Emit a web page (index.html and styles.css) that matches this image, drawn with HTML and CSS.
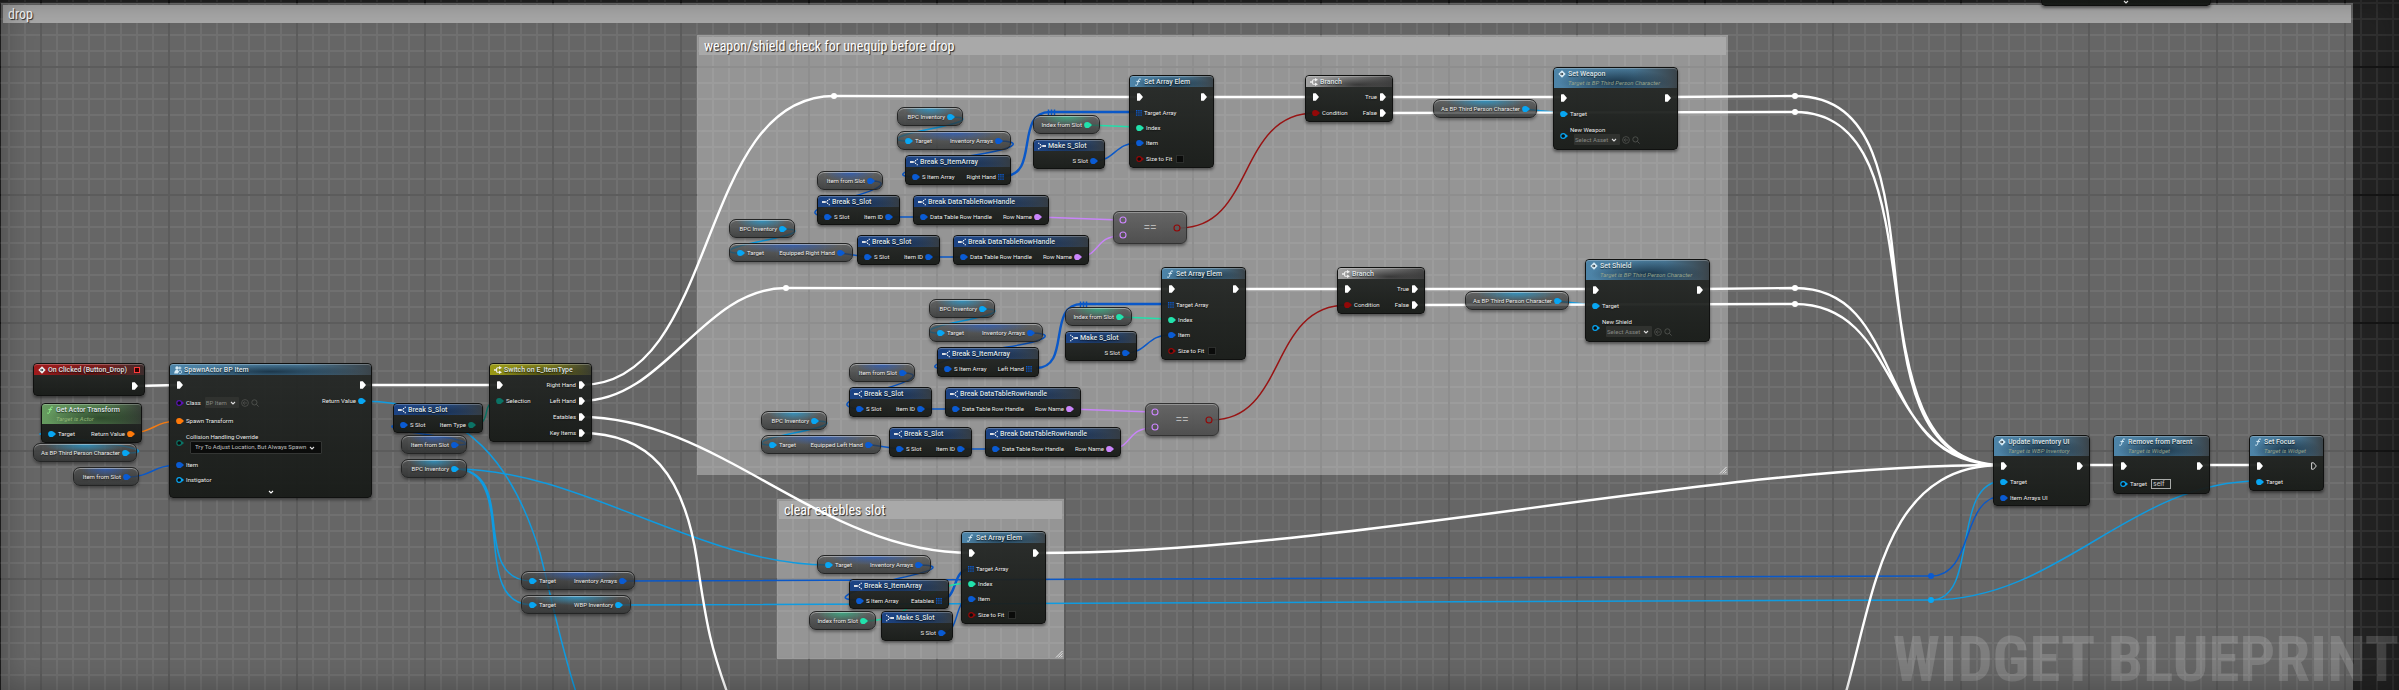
FILE: index.html
```html
<!DOCTYPE html>
<html lang="en">
<head>
<meta charset="utf-8">
<title>Widget Blueprint</title>
<link rel="stylesheet" href="styles.css">
</head>
<body>
<svg class="defs" aria-hidden="true">
  <symbol id="pin" viewBox="0 0 8 8"><circle cx="3.2" cy="4" r="3.1"/><path d="M5.6 1.8L8 4L5.6 6.2z"/></symbol>
  <symbol id="pin-open" viewBox="0 0 8 8"><circle cx="3.2" cy="4" r="2.4" fill="#0b0d0d" stroke="currentColor" stroke-width="1.2"/><path d="M6 2.2L8 4L6 5.8z"/></symbol>
  <symbol id="ring" viewBox="0 0 8 8"><circle cx="4" cy="4" r="3" fill="none" stroke="currentColor" stroke-width="1.1"/></symbol>
  <symbol id="exec" viewBox="0 0 6 8"><path d="M0 .8Q0 .2 .6 .2H2.8L6 4L2.8 7.8H.6Q0 7.8 0 7.2z"/></symbol>
  <symbol id="exec-open" viewBox="0 0 6 8"><path d="M.6 .8H2.6L5.3 4L2.6 7.2H.6z" fill="none" stroke="currentColor" stroke-width=".8"/></symbol>
  <symbol id="array" viewBox="0 0 6 6"><path d="M0 0h1.4v1.4H0zM2.2 0h1.4v1.4H2.2zM4.4 0h1.4v1.4H4.4zM0 2.2h1.4v1.4H0zM2.2 2.2h1.4v1.4H2.2zM4.4 2.2h1.4v1.4H4.4zM0 4.4h1.4v1.4H0zM2.2 4.4h1.4v1.4H2.2zM4.4 4.4h1.4v1.4H4.4z"/></symbol>
  <symbol id="i-fn" viewBox="0 0 8 8"><path d="M6.8 1.2C5.2 .4 4.6 1.6 4.3 3.2L3.6 5.8C3.3 7.2 2.3 7.7 1.2 7M2.4 3.4H6" fill="none" stroke="currentColor" stroke-width="1"/></symbol>
  <symbol id="i-event" viewBox="0 0 8 8"><path d="M4 .3L7.7 4L4 7.7L.3 4z"/><path d="M3.8 2.4L5.4 4L3.8 5.6V4.6H2.2V3.4H3.8z" fill="#1c2830"/></symbol>
  <symbol id="i-break" viewBox="0 0 8 8"><path d="M0 3.1H3.8V4.9H0z"/><path d="M5 2h1.2v1H5zM6.6 .8H8v1H6.600zM5 5h1.200v1H5zM6.600 6.200H8v1H6.600zM4.400 3.200h1v1.600h-1z"/></symbol>
  <symbol id="i-make" viewBox="0 0 8 8"><path d="M4.2 3.1H8V4.9H4.2z"/><path d="M1.800 2h1.200v1H1.800zM0 .8h1.400v1H0zM1.800 5h1.200v1H1.800zM0 6.200h1.400v1H0zM2.600 3.200h1v1.600h-1z"/></symbol>
  <symbol id="i-branch" viewBox="0 0 8 8"><path d="M0 3.3H2.4V4.7H0zM5 0L8 1.8L5 3.4zM5 4.6L8 6.2L5 8z"/><path d="M5.4 1.7H3.6Q2.6 1.7 2.6 2.8V5.2Q2.6 6.3 3.6 6.3H5.4" fill="none" stroke="currentColor" stroke-width="1.1"/></symbol>
  <symbol id="i-spawn" viewBox="0 0 8 8"><circle cx="3" cy="2" r="1.7"/><path d="M.2 7.6Q.4 3.6 3.4 3.8L5 5.2L4 7.6zM5.4 .4h1v1h1v1h-1v1h-1v-1h-1v-1h1z"/><path d="M4.6 5.6a1.6 1.6 0 1 1 .6 1.6" fill="none" stroke="currentColor" stroke-width=".8"/></symbol>
  <symbol id="i-back" viewBox="0 0 8 8"><g fill="none" stroke="currentColor" stroke-width=".8"><circle cx="4" cy="4" r="3.4"/><path d="M6 4H2.2M3.8 2.3L2.1 4L3.8 5.7"/></g></symbol>
  <symbol id="i-find" viewBox="0 0 8 8"><g fill="none" stroke="currentColor" stroke-width=".9"><circle cx="3.4" cy="3.4" r="2.6"/><path d="M5.4 5.4L7.6 7.6"/></g></symbol>
  <symbol id="i-down" viewBox="0 0 6 6"><path d="M1 2L3 4L5 2" fill="none" stroke="currentColor" stroke-width="1.1"/></symbol>
  <symbol id="grip" viewBox="0 0 8 8"><path d="M1 7.5L7.5 1M3.4 7.5L7.5 3.4M5.8 7.5L7.5 5.8" fill="none" stroke="#e4e4e4" stroke-width="1"/></symbol>
</svg>

<main class="graph">
  <section class="comment comment-drop"><h1 class="comment-title">drop</h1></section>
  <section class="comment comment-equip"><h2 class="comment-title">weapon/shield check for unequip before drop</h2><svg class="grip"><use href="#grip"/></svg></section>
  <section class="comment comment-eat"><h2 class="comment-title">clear eatebles slot</h2><svg class="grip"><use href="#grip"/></svg></section>

  <svg class="wires" aria-hidden="true">
    <g id="lane-wires">
      <path class="w-exec" d="M1204 97H1315M1383 97H1562"/>
      <path class="w-struct thick" d="M1004 176C1040 176 1014 112 1050 112H1136"/>
      <path class="w-struct" d="M1048.500 109.500v6M1051.500 109.500v6M1054.500 109.500v6"/>
      <path class="w-int" d="M1088 125L1137 127"/>
      <path class="w-struct" d="M1094 161C1115 161 1115 143 1137 143M998 141C1022 141 1020 148 975 155S880 176 914 177M871 181C887 181 886 187 855 196S800 213 826 217M889 217H923M929 257H963M840 253L867 257"/>
      <path class="w-obj" d="M950 117C972 117 966 122 930 129C894 136 890 141 908 141M782 229C804 229 798 234 762 241C726 248 722 253 740 253M1524 109L1562 113"/>
      <path class="w-name" d="M1038 217L1120 220M1078 257C1100 257 1095 236 1120 236"/>
      <path class="w-bool" d="M1180 228C1255 228 1237 113 1315 113"/>
    </g>
    <use href="#lane-wires" transform="translate(32 192)"/>
    <path class="w-obj" d="M361 401C470 401 515 470 540 553C552 600 562 650 576 692M125 453C150 453 140 448 100 442S20 434 51 433M455 469C520 469 468 581 532 581M455 469C520 469 468 605 532 605M455 469C580 469 700 565 828 565M618 605L1931 600M1931 600C1980 600 1950 481 2003 481M1931 600C2060 600 2130 481 2259 481"/>
    <path class="w-struct" d="M127 477C152 477 153 465 178 465M455 445C477 445 466 440 430 435S380 425 403 425M622 581L1931 576C1975 576 1960 496 2003 496M918 565C942 565 938 570 900 578C860 588 825 600 859 600M941 633C962 633 952 599 971 599"/>
    <path class="w-struct thick" d="M939 600C960 600 950 569 971 569"/>
    <path class="w-int" d="M864 621C915 621 920 583 971 583"/>
    <path class="w-transform" d="M130 433C153 433 155 421 178 421"/>
    <path class="w-enum" d="M472 425C495 425 478 401 499 401"/>
    <path class="w-exec" d="M135 386L178 385M362 385H498M581 385C720 385 695 96 834 96L1138 97M581 401C665 401 702 288 786 288L1170 289M581 417C720 417 820 553 971 553M581 433C650 433 684 475 697 560C707 630 712 650 727 692M1036 553C1350 553 1700 465 2002 465"/>
    <path class="w-exec" d="M1668 97L1795 96M1383 113L1795 112M1700 289L1795 288M1415 305L1795 304M1795 96C1960 96 1830 465 2002 465M1795 112C1950 112 1840 465 2002 465M1795 288C1910 288 1870 465 2002 465M1795 304C1905 304 1880 465 2002 465M1846 692C1875 590 1885 465 2002 465M2080 465H2123M2200 465H2259"/>
    <g fill="#fff"><circle cx="834" cy="96" r="3"/><circle cx="786" cy="288" r="3"/><circle cx="1795" cy="96" r="3"/><circle cx="1795" cy="112" r="3"/><circle cx="1795" cy="288" r="3"/><circle cx="1795" cy="304" r="3"/></g>
    <circle cx="1931" cy="576" r="3" fill="#0a5bd3"/><circle cx="1931" cy="600" r="3" fill="#08a6f3"/>
  </svg>

  <article class="node stub at-stub"><svg class="more"><use href="#i-down"/></svg></article>

  <article class="node at-clicked">
    <header class="head red"><svg class="icon"><use href="#i-event"/></svg><h3>On Clicked (Button_Drop)</h3><i class="delegate"></i></header>
    <div class="pins"><div class="col out"><div class="pin tall"><svg class="exec"><use href="#exec"/></svg></div></div></div>
  </article>
  <article class="node at-transform">
    <header class="head green two"><svg class="icon"><use href="#i-fn"/></svg><h3>Get Actor Transform</h3><p>Target is Actor</p></header>
    <div class="pins"><div class="col"><div class="pin"><svg class="dot obj"><use href="#pin"/></svg>Target</div></div><div class="col out"><div class="pin">Return Value<svg class="dot transform"><use href="#pin"/></svg></div></div></div>
  </article>
  <article class="pill p-obj at-char0"><span class="pin">As BP Third Person Character<svg class="dot obj"><use href="#pin"/></svg></span></article>
  <article class="pill p-struct at-item0"><span class="pin">Item from Slot<svg class="dot struct"><use href="#pin"/></svg></span></article>

  <article class="node at-spawn">
    <header class="head blue"><svg class="icon"><use href="#i-spawn"/></svg><h3>SpawnActor BP Item</h3></header>
    <div class="pins">
      <div class="col">
        <div class="pin"><svg class="exec"><use href="#exec"/></svg></div>
        <div class="pin class-row"><svg class="dot class"><use href="#pin-open"/></svg><label for="cls">Class</label><span class="pick soft"><select id="cls"><option>BP Item</option></select><svg><use href="#i-down"/></svg></span><button class="tool" aria-label="Use selected"><svg><use href="#i-back"/></svg></button><button class="tool" aria-label="Browse"><svg><use href="#i-find"/></svg></button></div>
        <div class="pin mid"><svg class="dot transform"><use href="#pin"/></svg>Spawn Transform</div>
        <div class="pin field"><svg class="dot enum"><use href="#pin-open"/></svg><div class="stack"><label for="col">Collision Handling Override</label><span class="pick dark"><select id="col"><option>Try To Adjust Location, But Always Spawn</option></select><svg><use href="#i-down"/></svg></span></div></div>
        <div class="pin short"><svg class="dot struct"><use href="#pin"/></svg>Item</div>
        <div class="pin short"><svg class="dot obj"><use href="#pin-open"/></svg>Instigator</div>
      </div>
      <div class="col out"><div class="pin"><svg class="exec"><use href="#exec"/></svg></div><div class="pin">Return Value<svg class="dot obj"><use href="#pin"/></svg></div></div>
    </div>
    <button class="expand" aria-label="Show more"><svg class="more"><use href="#i-down"/></svg></button>
  </article>

  <article class="node at-type">
    <header class="head struct-h"><svg class="icon"><use href="#i-break"/></svg><h3>Break S_Slot</h3></header>
    <div class="pins"><div class="col"><div class="pin short"><svg class="dot struct"><use href="#pin"/></svg>S Slot</div></div><div class="col out"><div class="pin short">Item Type<svg class="dot enum"><use href="#pin"/></svg></div></div></div>
  </article>
  <article class="pill p-struct at-item1"><span class="pin">Item from Slot<svg class="dot struct"><use href="#pin"/></svg></span></article>
  <article class="pill p-obj at-bpc1"><span class="pin">BPC Inventory<svg class="dot obj"><use href="#pin"/></svg></span></article>

  <article class="node at-switch">
    <header class="head olive"><svg class="icon"><use href="#i-branch"/></svg><h3>Switch on E_ItemType</h3></header>
    <div class="pins">
      <div class="col"><div class="pin"><svg class="exec"><use href="#exec"/></svg></div><div class="pin"><svg class="dot enum"><use href="#pin"/></svg>Selection</div></div>
      <div class="col out"><div class="pin">Right Hand<svg class="exec"><use href="#exec"/></svg></div><div class="pin">Left Hand<svg class="exec"><use href="#exec"/></svg></div><div class="pin">Eatables<svg class="exec"><use href="#exec"/></svg></div><div class="pin">Key Items<svg class="exec"><use href="#exec"/></svg></div></div>
    </div>
  </article>
  <article class="pill p-struct at-arrays"><span class="pin"><svg class="dot obj"><use href="#pin"/></svg>Target</span><span class="pin">Inventory Arrays<svg class="dot struct"><use href="#pin"/></svg></span></article>
  <article class="pill p-obj at-wbp"><span class="pin"><svg class="dot obj"><use href="#pin"/></svg>Target</span><span class="pin">WBP Inventory<svg class="dot obj"><use href="#pin"/></svg></span></article>

  <section class="lane lane-weapon">
    <article class="pill p-obj l-bpc-a"><span class="pin">BPC Inventory<svg class="dot obj"><use href="#pin"/></svg></span></article>
    <article class="pill p-struct l-arrays"><span class="pin"><svg class="dot obj"><use href="#pin"/></svg>Target</span><span class="pin">Inventory Arrays<svg class="dot struct"><use href="#pin"/></svg></span></article>
    <article class="node l-itemarray">
      <header class="head struct-h"><svg class="icon"><use href="#i-break"/></svg><h3>Break S_ItemArray</h3></header>
      <div class="pins"><div class="col"><div class="pin short"><svg class="dot struct"><use href="#pin"/></svg>S Item Array</div></div><div class="col out"><div class="pin short">Right Hand<svg class="arr struct"><use href="#array"/></svg></div></div></div>
    </article>
    <article class="pill p-struct l-item"><span class="pin">Item from Slot<svg class="dot struct"><use href="#pin"/></svg></span></article>
    <article class="node l-slot-a">
      <header class="head struct-h"><svg class="icon"><use href="#i-break"/></svg><h3>Break S_Slot</h3></header>
      <div class="pins"><div class="col"><div class="pin short"><svg class="dot struct"><use href="#pin"/></svg>S Slot</div></div><div class="col out"><div class="pin short">Item ID<svg class="dot struct"><use href="#pin"/></svg></div></div></div>
    </article>
    <article class="node l-row-a">
      <header class="head struct-h"><svg class="icon"><use href="#i-break"/></svg><h3>Break DataTableRowHandle</h3></header>
      <div class="pins"><div class="col"><div class="pin short"><svg class="dot struct"><use href="#pin"/></svg>Data Table Row Handle</div></div><div class="col out"><div class="pin short">Row Name<svg class="dot name"><use href="#pin"/></svg></div></div></div>
    </article>
    <article class="pill p-obj l-bpc-b"><span class="pin">BPC Inventory<svg class="dot obj"><use href="#pin"/></svg></span></article>
    <article class="pill p-struct l-equipped"><span class="pin"><svg class="dot obj"><use href="#pin"/></svg>Target</span><span class="pin">Equipped Right Hand<svg class="dot struct"><use href="#pin"/></svg></span></article>
    <article class="node l-slot-b">
      <header class="head struct-h"><svg class="icon"><use href="#i-break"/></svg><h3>Break S_Slot</h3></header>
      <div class="pins"><div class="col"><div class="pin short"><svg class="dot struct"><use href="#pin"/></svg>S Slot</div></div><div class="col out"><div class="pin short">Item ID<svg class="dot struct"><use href="#pin"/></svg></div></div></div>
    </article>
    <article class="node l-row-b">
      <header class="head struct-h"><svg class="icon"><use href="#i-break"/></svg><h3>Break DataTableRowHandle</h3></header>
      <div class="pins"><div class="col"><div class="pin short"><svg class="dot struct"><use href="#pin"/></svg>Data Table Row Handle</div></div><div class="col out"><div class="pin short">Row Name<svg class="dot name"><use href="#pin"/></svg></div></div></div>
    </article>
    <article class="pill p-int l-index"><span class="pin">Index from Slot<svg class="dot int"><use href="#pin"/></svg></span></article>
    <article class="node l-make">
      <header class="head struct-h"><svg class="icon"><use href="#i-make"/></svg><h3>Make S_Slot</h3></header>
      <div class="pins"><div class="col out"><div class="pin short">S Slot<svg class="dot struct"><use href="#pin"/></svg></div></div></div>
    </article>
    <article class="node l-set">
      <header class="head blue"><svg class="icon"><use href="#i-fn"/></svg><h3>Set Array Elem</h3></header>
      <div class="pins">
        <div class="col"><div class="pin"><svg class="exec"><use href="#exec"/></svg></div><div class="pin short"><svg class="arr struct"><use href="#array"/></svg>Target Array</div><div class="pin short"><svg class="dot int"><use href="#pin"/></svg>Index</div><div class="pin short"><svg class="dot struct"><use href="#pin"/></svg>Item</div><label class="pin mid"><svg class="dot bool"><use href="#pin-open"/></svg>Size to Fit<input class="check" type="checkbox"></label></div>
        <div class="col out"><div class="pin"><svg class="exec"><use href="#exec"/></svg></div></div>
      </div>
    </article>
    <article class="compare l-equal"><div class="rings"><svg class="ring name"><use href="#ring"/></svg><svg class="ring name"><use href="#ring"/></svg></div><b>==</b><svg class="ring bool"><use href="#ring"/></svg></article>
    <article class="node l-branch">
      <header class="head gray"><svg class="icon"><use href="#i-branch"/></svg><h3>Branch</h3></header>
      <div class="pins"><div class="col"><div class="pin"><svg class="exec"><use href="#exec"/></svg></div><div class="pin"><svg class="dot bool"><use href="#pin"/></svg>Condition</div></div><div class="col out"><div class="pin">True<svg class="exec"><use href="#exec"/></svg></div><div class="pin">False<svg class="exec"><use href="#exec"/></svg></div></div></div>
    </article>
    <article class="pill p-obj l-char"><span class="pin">As BP Third Person Character<svg class="dot obj"><use href="#pin"/></svg></span></article>
    <article class="node l-target">
      <header class="head blue two"><svg class="icon"><use href="#i-event"/></svg><h3>Set Weapon</h3><p>Target is BP Third Person Character</p></header>
      <div class="pins">
        <div class="col"><div class="pin"><svg class="exec"><use href="#exec"/></svg></div><div class="pin"><svg class="dot obj"><use href="#pin"/></svg>Target</div><div class="pin asset-row"><svg class="dot obj"><use href="#pin-open"/></svg><div class="stack"><label for="wpn">New Weapon</label><div class="asset"><span class="pick soft"><select id="wpn"><option>Select Asset</option></select><svg><use href="#i-down"/></svg></span><button class="tool" aria-label="Use selected"><svg><use href="#i-back"/></svg></button><button class="tool" aria-label="Browse"><svg><use href="#i-find"/></svg></button></div></div></div></div>
        <div class="col out"><div class="pin"><svg class="exec"><use href="#exec"/></svg></div></div>
      </div>
    </article>
  </section>

  <section class="lane lane-shield">
    <article class="pill p-obj l-bpc-a"><span class="pin">BPC Inventory<svg class="dot obj"><use href="#pin"/></svg></span></article>
    <article class="pill p-struct l-arrays"><span class="pin"><svg class="dot obj"><use href="#pin"/></svg>Target</span><span class="pin">Inventory Arrays<svg class="dot struct"><use href="#pin"/></svg></span></article>
    <article class="node l-itemarray">
      <header class="head struct-h"><svg class="icon"><use href="#i-break"/></svg><h3>Break S_ItemArray</h3></header>
      <div class="pins"><div class="col"><div class="pin short"><svg class="dot struct"><use href="#pin"/></svg>S Item Array</div></div><div class="col out"><div class="pin short">Left Hand<svg class="arr struct"><use href="#array"/></svg></div></div></div>
    </article>
    <article class="pill p-struct l-item"><span class="pin">Item from Slot<svg class="dot struct"><use href="#pin"/></svg></span></article>
    <article class="node l-slot-a">
      <header class="head struct-h"><svg class="icon"><use href="#i-break"/></svg><h3>Break S_Slot</h3></header>
      <div class="pins"><div class="col"><div class="pin short"><svg class="dot struct"><use href="#pin"/></svg>S Slot</div></div><div class="col out"><div class="pin short">Item ID<svg class="dot struct"><use href="#pin"/></svg></div></div></div>
    </article>
    <article class="node l-row-a">
      <header class="head struct-h"><svg class="icon"><use href="#i-break"/></svg><h3>Break DataTableRowHandle</h3></header>
      <div class="pins"><div class="col"><div class="pin short"><svg class="dot struct"><use href="#pin"/></svg>Data Table Row Handle</div></div><div class="col out"><div class="pin short">Row Name<svg class="dot name"><use href="#pin"/></svg></div></div></div>
    </article>
    <article class="pill p-obj l-bpc-b"><span class="pin">BPC Inventory<svg class="dot obj"><use href="#pin"/></svg></span></article>
    <article class="pill p-struct l-equipped"><span class="pin"><svg class="dot obj"><use href="#pin"/></svg>Target</span><span class="pin">Equipped Left Hand<svg class="dot struct"><use href="#pin"/></svg></span></article>
    <article class="node l-slot-b">
      <header class="head struct-h"><svg class="icon"><use href="#i-break"/></svg><h3>Break S_Slot</h3></header>
      <div class="pins"><div class="col"><div class="pin short"><svg class="dot struct"><use href="#pin"/></svg>S Slot</div></div><div class="col out"><div class="pin short">Item ID<svg class="dot struct"><use href="#pin"/></svg></div></div></div>
    </article>
    <article class="node l-row-b">
      <header class="head struct-h"><svg class="icon"><use href="#i-break"/></svg><h3>Break DataTableRowHandle</h3></header>
      <div class="pins"><div class="col"><div class="pin short"><svg class="dot struct"><use href="#pin"/></svg>Data Table Row Handle</div></div><div class="col out"><div class="pin short">Row Name<svg class="dot name"><use href="#pin"/></svg></div></div></div>
    </article>
    <article class="pill p-int l-index"><span class="pin">Index from Slot<svg class="dot int"><use href="#pin"/></svg></span></article>
    <article class="node l-make">
      <header class="head struct-h"><svg class="icon"><use href="#i-make"/></svg><h3>Make S_Slot</h3></header>
      <div class="pins"><div class="col out"><div class="pin short">S Slot<svg class="dot struct"><use href="#pin"/></svg></div></div></div>
    </article>
    <article class="node l-set">
      <header class="head blue"><svg class="icon"><use href="#i-fn"/></svg><h3>Set Array Elem</h3></header>
      <div class="pins">
        <div class="col"><div class="pin"><svg class="exec"><use href="#exec"/></svg></div><div class="pin short"><svg class="arr struct"><use href="#array"/></svg>Target Array</div><div class="pin short"><svg class="dot int"><use href="#pin"/></svg>Index</div><div class="pin short"><svg class="dot struct"><use href="#pin"/></svg>Item</div><label class="pin mid"><svg class="dot bool"><use href="#pin-open"/></svg>Size to Fit<input class="check" type="checkbox"></label></div>
        <div class="col out"><div class="pin"><svg class="exec"><use href="#exec"/></svg></div></div>
      </div>
    </article>
    <article class="compare l-equal"><div class="rings"><svg class="ring name"><use href="#ring"/></svg><svg class="ring name"><use href="#ring"/></svg></div><b>==</b><svg class="ring bool"><use href="#ring"/></svg></article>
    <article class="node l-branch">
      <header class="head gray"><svg class="icon"><use href="#i-branch"/></svg><h3>Branch</h3></header>
      <div class="pins"><div class="col"><div class="pin"><svg class="exec"><use href="#exec"/></svg></div><div class="pin"><svg class="dot bool"><use href="#pin"/></svg>Condition</div></div><div class="col out"><div class="pin">True<svg class="exec"><use href="#exec"/></svg></div><div class="pin">False<svg class="exec"><use href="#exec"/></svg></div></div></div>
    </article>
    <article class="pill p-obj l-char"><span class="pin">As BP Third Person Character<svg class="dot obj"><use href="#pin"/></svg></span></article>
    <article class="node l-target">
      <header class="head blue two"><svg class="icon"><use href="#i-event"/></svg><h3>Set Shield</h3><p>Target is BP Third Person Character</p></header>
      <div class="pins">
        <div class="col"><div class="pin"><svg class="exec"><use href="#exec"/></svg></div><div class="pin"><svg class="dot obj"><use href="#pin"/></svg>Target</div><div class="pin asset-row"><svg class="dot obj"><use href="#pin-open"/></svg><div class="stack"><label for="shd">New Shield</label><div class="asset"><span class="pick soft"><select id="shd"><option>Select Asset</option></select><svg><use href="#i-down"/></svg></span><button class="tool" aria-label="Use selected"><svg><use href="#i-back"/></svg></button><button class="tool" aria-label="Browse"><svg><use href="#i-find"/></svg></button></div></div></div></div>
        <div class="col out"><div class="pin"><svg class="exec"><use href="#exec"/></svg></div></div>
      </div>
    </article>
  </section>

  <article class="pill p-struct at-eat-arrays"><span class="pin"><svg class="dot obj"><use href="#pin"/></svg>Target</span><span class="pin">Inventory Arrays<svg class="dot struct"><use href="#pin"/></svg></span></article>
  <article class="node at-eat-break">
    <header class="head struct-h"><svg class="icon"><use href="#i-break"/></svg><h3>Break S_ItemArray</h3></header>
    <div class="pins"><div class="col"><div class="pin short"><svg class="dot struct"><use href="#pin"/></svg>S Item Array</div></div><div class="col out"><div class="pin short">Eatables<svg class="arr struct"><use href="#array"/></svg></div></div></div>
  </article>
  <article class="pill p-int at-eat-index"><span class="pin">Index from Slot<svg class="dot int"><use href="#pin"/></svg></span></article>
  <article class="node at-eat-make">
    <header class="head struct-h"><svg class="icon"><use href="#i-make"/></svg><h3>Make S_Slot</h3></header>
    <div class="pins"><div class="col out"><div class="pin short">S Slot<svg class="dot struct"><use href="#pin"/></svg></div></div></div>
  </article>
  <article class="node at-eat-set">
    <header class="head blue"><svg class="icon"><use href="#i-fn"/></svg><h3>Set Array Elem</h3></header>
    <div class="pins">
      <div class="col"><div class="pin"><svg class="exec"><use href="#exec"/></svg></div><div class="pin short"><svg class="arr struct"><use href="#array"/></svg>Target Array</div><div class="pin short"><svg class="dot int"><use href="#pin"/></svg>Index</div><div class="pin short"><svg class="dot struct"><use href="#pin"/></svg>Item</div><label class="pin mid"><svg class="dot bool"><use href="#pin-open"/></svg>Size to Fit<input class="check" type="checkbox"></label></div>
      <div class="col out"><div class="pin"><svg class="exec"><use href="#exec"/></svg></div></div>
    </div>
  </article>

  <article class="node at-update">
    <header class="head blue two"><svg class="icon"><use href="#i-event"/></svg><h3>Update Inventory UI</h3><p>Target is WBP Inventory</p></header>
    <div class="pins"><div class="col"><div class="pin"><svg class="exec"><use href="#exec"/></svg></div><div class="pin"><svg class="dot obj"><use href="#pin"/></svg>Target</div><div class="pin short"><svg class="dot struct"><use href="#pin"/></svg>Item Arrays UI</div></div><div class="col out"><div class="pin"><svg class="exec"><use href="#exec"/></svg></div></div></div>
  </article>
  <article class="node at-remove">
    <header class="head blue two"><svg class="icon"><use href="#i-fn"/></svg><h3>Remove from Parent</h3><p>Target is Widget</p></header>
    <div class="pins"><div class="col"><div class="pin"><svg class="exec"><use href="#exec"/></svg></div><label class="pin class-row"><svg class="dot obj"><use href="#pin-open"/></svg>Target<input class="self" type="text" value="self"></label></div><div class="col out"><div class="pin"><svg class="exec"><use href="#exec"/></svg></div></div></div>
  </article>
  <article class="node at-focus">
    <header class="head blue two"><svg class="icon"><use href="#i-fn"/></svg><h3>Set Focus</h3><p>Target is Widget</p></header>
    <div class="pins"><div class="col"><div class="pin"><svg class="exec"><use href="#exec"/></svg></div><div class="pin"><svg class="dot obj"><use href="#pin"/></svg>Target</div></div><div class="col out"><div class="pin"><svg class="exec"><use href="#exec-open"/></svg></div></div></div>
  </article>

  <div class="watermark">WIDGET BLUEPRINT</div>
</main>
</body>
</html>
```

FILE: styles.css
```css
* { box-sizing: border-box; }
body { margin: 0; background: #222; font-family: Roboto, "Liberation Sans", sans-serif; }
h1, h2, h3, p { margin: 0; font-weight: inherit; }
svg { display: block; flex: none; fill: currentColor; }
.defs { position: absolute; width: 0; height: 0; }

.graph {
  position: relative;
  min-height: 100vh;
  overflow: hidden;
  color: #ececec;
  font-size: 6px;
  line-height: 8px;
  background-color: #222;
  background-image:
    linear-gradient(90deg, #141414 2px, transparent 2px),
    linear-gradient(#141414 2px, transparent 2px),
    linear-gradient(90deg, #303030 2px, transparent 2px),
    linear-gradient(#303030 2px, transparent 2px);
  background-size: 128px 128px, 128px 128px, 16px 16px, 16px 16px;
  background-position: 40px 0, 0 66px, 8px 0, 0 2px;
}
.graph::after {
  content: "";
  position: absolute;
  inset: 0;
  pointer-events: none;
  box-shadow: inset 0 0 32px rgba(0, 0, 0, .3);
}

/* comment boxes */
.comment { position: absolute; padding: 2px; background: rgba(255, 255, 255, .31); }
.comment-drop { left: 1px; right: 46px; top: 3px; bottom: -20px; }
.comment-equip { left: 697px; top: 35px; width: 1031px; height: 440px; }
.comment-eat { left: 777px; top: 499px; width: 287px; height: 160px; }
.comment-title {
  padding: 0 5px;
  background: #a9a9a9;
  color: #fff;
  font-family: "Roboto Condensed", "Liberation Sans Narrow", Roboto, sans-serif;
  font-size: 14px;
  line-height: 18px;
  text-shadow: 1px 1px 1px #222;
}
.grip { position: absolute; right: 1px; bottom: 1px; width: 8px; height: 8px; }

/* wires */
.wires { position: absolute; inset: 0; width: 100%; height: 100%; overflow: visible; fill: none; }
.w-exec, .w-struct, .w-obj, .w-int, .w-name, .w-bool, .w-enum, .w-transform { fill: none; stroke-width: 1.5; }
.w-exec { stroke: #fff; stroke-width: 2.4; }
.w-struct { stroke: #0a58c8; }
.w-struct.thick { stroke-width: 2.4; }
.w-obj { stroke: #0f9be0; }
.w-int { stroke: #22dfaa; }
.w-name { stroke: #c884f8; }
.w-bool { stroke: #981414; }
.w-enum { stroke: #0b7365; }
.w-transform { stroke: #f57b12; }

/* nodes */
.node {
  position: absolute;
  border: 1px solid #101110;
  border-radius: 4px;
  background: linear-gradient(rgba(36, 39, 37, .93), rgba(24, 27, 24, .96));
  box-shadow: 0 2px 3px rgba(0, 0, 0, .45);
}
.head {
  display: grid;
  grid-template-columns: 8px 1fr auto;
  column-gap: 2px;
  align-items: center;
  height: 11px;
  padding: 0 4px;
  border-radius: 3px 3px 0 0;
  box-shadow: inset 0 1px 0 rgba(255, 255, 255, .25);
}
.head h3 { font-size: 7px; font-weight: 500; line-height: 10px; color: #dfe4e7; white-space: nowrap; text-shadow: 0 1px 1px rgba(0, 0, 0, .6); }
.head p { grid-column: 2; line-height: 8px; font-style: italic; color: #98a48c; white-space: nowrap; }
.head.two { height: 20px; padding-top: 1px; align-content: start; }
.icon { width: 8px; height: 8px; color: #f0f0f0; }
.blue .icon { color: #d8ecf6; }
.blue { background: radial-gradient(ellipse at 50% 70%, rgba(14, 34, 50, .75), transparent 65%), linear-gradient(90deg, #4d84a8, #45728f 65%, #3b444a); }
.struct-h { background: radial-gradient(ellipse at 50% 70%, rgba(12, 22, 40, .5), transparent 65%), linear-gradient(90deg, #1c4384, #24487c 60%, #343c44); }
.red { background: radial-gradient(ellipse at 50% 80%, rgba(50, 10, 10, .6), transparent 65%), linear-gradient(90deg, #a01a1c, #84201f 60%, #3c2c2c); }
.green { background: radial-gradient(ellipse at 60% 70%, rgba(24, 44, 24, .6), transparent 65%), linear-gradient(90deg, #669b60, #527a4e 65%, #384038); }
.green .icon { color: #8ff08a; }
.green p { color: #94b878; }
.olive { background: radial-gradient(ellipse at 55% 80%, rgba(40, 40, 10, .6), transparent 65%), linear-gradient(90deg, #9a9a16, #7d7e20 60%, #3c3e32); }
.gray { background: radial-gradient(ellipse at 60% 80%, rgba(30, 30, 30, .7), transparent 65%), linear-gradient(90deg, #a2a2a2, #777 60%, #444); }
.delegate { width: 6px; height: 6px; border: 1px solid #ff3a3a; background: #300; }

.pins { display: flex; justify-content: space-between; padding: 2px 6px 0; }
.col { display: flex; flex-direction: column; }
.col.out { align-items: flex-end; margin-left: auto; }
.pin { display: flex; align-items: center; gap: 2px; height: 16px; white-space: nowrap; text-shadow: 0 1px 1px rgba(0, 0, 0, .6); }
.pin.tall { height: 18px; }
.pin.mid { height: 17px; }
.pin.short { height: 15px; }
.pin.class-row { height: 19px; }
.pin.field { height: 28px; }
.pin.asset-row { height: 27px; }
.dot { width: 8px; height: 8px; }
.exec { width: 6px; height: 8px; color: #fff; margin-left: 1px; }
.arr { width: 6px; height: 6px; }
.ring { width: 8px; height: 8px; }
.obj { color: #08a6f3; }
.struct { color: #0a5bd3; }
.int { color: #22e2ac; }
.name { color: #cb86fc; }
.bool { color: #930808; }
.enum { color: #0b7365; }
.class { color: #5a14b4; }
.transform { color: #ff7a0a; }

/* fields inside nodes */
.stack { display: flex; flex-direction: column; align-items: flex-start; }
.stack .pick { margin-left: 4px; }
.asset { display: flex; align-items: center; gap: 2px; }
.pick { position: relative; display: flex; }
.pick select { appearance: none; margin: 0; border: 0; border-radius: 1px; height: 11px; padding: 0 11px 0 1px; font: inherit; }
.pick svg { position: absolute; right: 3px; top: 3px; width: 6px; height: 6px; color: #ddd; pointer-events: none; }
.soft { margin-left: 2px; }
.soft select { background: #30322f; color: #858783; }
.dark select { height: 13px; padding: 0 14px 0 4px; background: #0b0c0b; border: 1px solid #343634; color: #c0c0c0; }
.dark svg { right: 7px; top: 4px; }
.tool { border: 0; padding: 0; background: none; color: #50524f; }
.tool svg { width: 8px; height: 8px; }
.check { appearance: none; width: 8px; height: 8px; margin: 0 0 0 2px; background: #0a0b0a; border: 1px solid #2c2e2c; }
.self { width: 20px; height: 10px; margin: 0 0 0 2px; padding: 0 1px; border: 1px solid #a8aaa8; background: none; color: #c8c8c8; font: 7px/8px Roboto, sans-serif; }
.expand { display: block; margin: 0 auto; padding: 2px; border: 0; background: none; color: #fff; }
.more { width: 6px; height: 6px; }
.stub { display: flex; justify-content: center; align-items: flex-end; color: #fff; }

/* variable pills */
.pill {
  position: absolute;
  display: flex;
  justify-content: space-between;
  align-items: center;
  height: 19px;
  padding: 0 7px;
  border: 1px solid #242525;
  border-radius: 7px;
  box-shadow: inset 0 1px 0 rgba(255, 255, 255, .4), 0 2px 3px rgba(0, 0, 0, .35);
}
.pill .pin:only-child { margin-left: auto; }
.p-obj { background: radial-gradient(ellipse 40% 50% at 50% 5%, rgba(40, 160, 215, .75), transparent), linear-gradient(rgba(70, 72, 72, .65), rgba(40, 42, 42, .75)); }
.p-struct { background: radial-gradient(ellipse 40% 50% at 50% 5%, rgba(40, 95, 200, .7), transparent), linear-gradient(rgba(70, 72, 72, .65), rgba(40, 42, 42, .75)); }
.p-int { background: radial-gradient(ellipse 40% 50% at 50% 5%, rgba(50, 190, 140, .7), transparent), linear-gradient(rgba(70, 72, 72, .65), rgba(40, 42, 42, .75)); }
.compare {
  position: absolute;
  display: flex;
  align-items: center;
  justify-content: space-between;
  padding: 1px 5px;
  border: 1px solid #333;
  border-radius: 6px;
  background: linear-gradient(rgba(96, 96, 96, .9), rgba(72, 72, 72, .9));
  box-shadow: inset 0 1px 0 rgba(255, 255, 255, .3), 0 2px 3px rgba(0, 0, 0, .4);
}
.rings { display: flex; flex-direction: column; gap: 7px; }
.compare b { font-size: 12px; font-weight: 400; color: #b8b8b8; }

/* canvas positions */
.at-stub { left: 2041px; top: -40px; width: 170px; height: 46px; }
.at-clicked { left: 33px; top: 363px; width: 112px; }
.at-transform { left: 41px; top: 403px; width: 101px; }
.at-char0 { left: 33px; top: 443px; width: 104px; }
.at-item0 { left: 73px; top: 467px; width: 66px; }
.at-spawn { left: 169px; top: 363px; width: 203px; }
.at-type { left: 393px; top: 403px; width: 90px; }
.at-item1 { left: 401px; top: 435px; width: 66px; }
.at-bpc1 { left: 401px; top: 459px; width: 66px; }
.at-switch { left: 489px; top: 363px; width: 103px; }
.at-arrays { left: 521px; top: 571px; width: 114px; }
.at-wbp { left: 521px; top: 595px; width: 110px; }
.at-eat-arrays { left: 817px; top: 555px; width: 114px; }
.at-eat-break { left: 849px; top: 579px; width: 100px; }
.at-eat-index { left: 809px; top: 611px; width: 67px; }
.at-eat-make { left: 881px; top: 611px; width: 72px; }
.at-eat-set { left: 961px; top: 531px; width: 85px; }
.at-update { left: 1993px; top: 435px; width: 97px; }
.at-remove { left: 2113px; top: 435px; width: 97px; }
.at-focus { left: 2249px; top: 435px; width: 75px; }

.lane { position: absolute; }
.lane-weapon { left: 729px; top: 67px; }
.lane-shield { left: 761px; top: 259px; }
.l-bpc-a { left: 168px; top: 40px; width: 66px; }
.l-arrays { left: 168px; top: 64px; width: 114px; }
.l-itemarray { left: 176px; top: 88px; width: 106px; }
.lane-shield .l-itemarray { width: 102px; }
.l-item { left: 88px; top: 104px; width: 66px; }
.l-slot-a { left: 88px; top: 128px; width: 83px; }
.l-row-a { left: 184px; top: 128px; width: 136px; }
.l-bpc-b { left: 0; top: 152px; width: 66px; }
.l-equipped { left: 0; top: 176px; width: 124px; }
.lane-shield .l-equipped { width: 120px; }
.l-slot-b { left: 128px; top: 168px; width: 83px; }
.l-row-b { left: 224px; top: 168px; width: 136px; }
.l-index { left: 304px; top: 48px; width: 67px; }
.l-make { left: 304px; top: 72px; width: 72px; }
.l-set { left: 400px; top: 8px; width: 85px; }
.l-equal { left: 384px; top: 144px; width: 74px; height: 33px; }
.l-branch { left: 576px; top: 8px; width: 88px; }
.l-char { left: 704px; top: 32px; width: 104px; }
.l-target { left: 824px; top: 0; width: 125px; }

.watermark {
  position: absolute;
  right: 0;
  bottom: -10px;
  height: 80px;
  color: rgba(255, 255, 255, .16);
  font-family: "Roboto Condensed", "Liberation Sans Narrow", Roboto, sans-serif;
  font-size: 63px;
  font-weight: 700;
  line-height: 60px;
  bottom: 0;
  height: auto;
  white-space: nowrap;
}
```
